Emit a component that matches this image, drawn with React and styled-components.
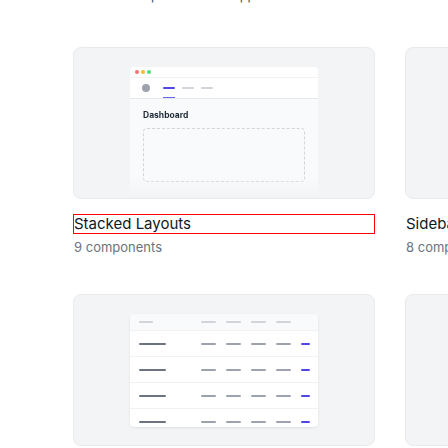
import React from "react";
import styled, { createGlobalStyle } from "styled-components";

const GlobalStyle = createGlobalStyle`
  html, body {
    margin: 0;
    padding: 0;
    background: #ffffff;
    overflow: hidden;
  }
  body {
    font-family: Inter, "Noto Sans", sans-serif;
  }
`;

const categories = [
  { title: "Stacked Layouts", count: 9, preview: "stacked", focused: true },
  { title: "Sidebar Layouts", count: 8, preview: "none" },
  { title: "Multi-Column Layouts", count: 6, preview: "none" },
  { title: "Tables", count: 19, preview: "table" },
  { title: "Lists", count: 14, preview: "none" },
  { title: "Grid Lists", count: 7, preview: "none" },
];

const App = () => {
  return (
    <>
      <GlobalStyle />
      <Page>
        <Intro>Beautiful responsive web applications.</Intro>
        <Grid>
          {categories.map((item) => (
            <Item key={item.title}>
              <Card>
                {item.preview === "stacked" && <StackedPreview />}
                {item.preview === "table" && <TablePreview />}
              </Card>
              <Title $focused={item.focused}>{item.title}</Title>
              <Count>{item.count} components</Count>
            </Item>
          ))}
        </Grid>
      </Page>
    </>
  );
};

const StackedPreview = () => (
  <Window>
    <TitleBar>
      <Dot $color="#f87171" />
      <Dot $color="#fbbf24" />
      <Dot $color="#4ade80" />
    </TitleBar>
    <Nav>
      <Avatar />
      <Tab $active>
        <Line $w={12} $color="#4f46e5" />
      </Tab>
      <Tab>
        <Line $w={12} $color="#d1d5db" />
      </Tab>
      <Tab>
        <Line $w={12} $color="#d1d5db" />
      </Tab>
    </Nav>
    <WindowBody>
      <Heading>Dashboard</Heading>
      <Placeholder />
    </WindowBody>
  </Window>
);

const rows = [0, 1, 2, 3];

const TablePreview = () => (
  <Table>
    <HeadRow>
      <Line $w={14} $color="#d1d5db" />
      <Line $w={15} $color="#d1d5db" />
      <Line $w={15} $color="#d1d5db" />
      <Line $w={15} $color="#d1d5db" />
      <Line $w={15} $color="#d1d5db" />
    </HeadRow>
    {rows.map((r) => (
      <BodyRow key={r}>
        <Line $w={27} $color="#6b7280" />
        <Line $w={15} $color="#9ca3af" />
        <Line $w={15} $color="#9ca3af" />
        <Line $w={15} $color="#9ca3af" />
        <Line $w={15} $color="#9ca3af" />
        <Line $w={9} $color="#4f46e5" />
      </BodyRow>
    ))}
  </Table>
);

export default App;

const Page = styled.div`
  padding-left: 73px;
  width: 1200px;
`;

const Intro = styled.p`
  margin: -13px 0 0 1px;
  font-size: 13px;
  line-height: 16px;
  color: #4b5563;
`;

const Grid = styled.div`
  display: grid;
  grid-template-columns: repeat(3, 302px);
  column-gap: 30px;
  row-gap: 39px;
  margin-top: 44px;
`;

const Item = styled.div`
  display: flex;
  flex-direction: column;
`;

const Card = styled.div`
  box-sizing: border-box;
  height: 152px;
  background: #f3f4f6;
  border: 1px solid #e9eaed;
  border-radius: 8px;
  display: flex;
  justify-content: center;
  padding-top: 19px;
  overflow: hidden;
`;

const Window = styled.div`
  width: 188px;
  height: 132px;
  background: #f9fafb;
  border-radius: 4px 4px 0 0;
  box-shadow: 0 1px 3px rgba(0, 0, 0, 0.06);
  display: flex;
  flex-direction: column;
  -webkit-mask-image: linear-gradient(to bottom, #000 82%, transparent 100%);
  mask-image: linear-gradient(to bottom, #000 82%, transparent 100%);
`;

const TitleBar = styled.div`
  height: 10px;
  display: flex;
  align-items: center;
  gap: 2px;
  padding-left: 5px;
  background: #ffffff;
  border-radius: 4px 4px 0 0;
  border-bottom: 1px solid #f1f2f4;
`;

const Dot = styled.span`
  width: 4px;
  height: 4px;
  border-radius: 50%;
  background: ${(p) => p.$color};
`;

const Nav = styled.div`
  height: 20px;
  display: flex;
  align-items: stretch;
  gap: 7px;
  padding-left: 12px;
  background: #ffffff;
  border-bottom: 1px solid #e5e7eb;
`;

const Avatar = styled.span`
  align-self: center;
  width: 8px;
  height: 8px;
  border-radius: 50%;
  background: #9ca3af;
  margin-right: 6px;
`;

const Tab = styled.div`
  display: flex;
  align-items: center;
  box-shadow: ${(p) => (p.$active ? "inset 0 -1px 0 #6366f1" : "none")};
`;

const Line = styled.span`
  display: block;
  width: ${(p) => p.$w}px;
  height: 2px;
  border-radius: 1px;
  background: ${(p) => p.$color};
`;

const WindowBody = styled.div`
  padding: 10px 13px 0;
`;

const Heading = styled.div`
  font-size: 8.5px;
  line-height: 12px;
  font-weight: 700;
  color: #1f2937;
`;

const Placeholder = styled.div`
  margin-top: 7px;
  height: 52px;
  border: 1px dashed #d1d5db;
  border-radius: 4px;
`;

const Table = styled.div`
  width: 188px;
  height: 113px;
  background: #ffffff;
  border-radius: 4px;
  box-shadow: 0 1px 3px rgba(0, 0, 0, 0.08);
  overflow: hidden;
`;

const HeadRow = styled.div`
  height: 16px;
  display: grid;
  grid-template-columns: 62px repeat(4, 25px) 9px;
  align-items: center;
  padding-left: 9px;
  background: #f9fafb;
`;

const BodyRow = styled.div`
  box-sizing: border-box;
  height: 26px;
  display: grid;
  grid-template-columns: 62px repeat(4, 25px) 9px;
  align-items: center;
  padding-left: 9px;
  border-top: 1px solid #f1f2f4;
`;

const Title = styled.h3`
  margin: 15px 0 0;
  height: 20px;
  font-size: 15px;
  line-height: 20px;
  font-weight: 400;
  color: #111827;
  outline: ${(p) => (p.$focused ? "1px solid #ff0000" : "none")};
  outline-offset: -1px;
  padding-left: 1px;
`;

const Count = styled.p`
  margin: 5px 0 0 1px;
  font-size: 13px;
  line-height: 16px;
  color: #6b7280;
`;
